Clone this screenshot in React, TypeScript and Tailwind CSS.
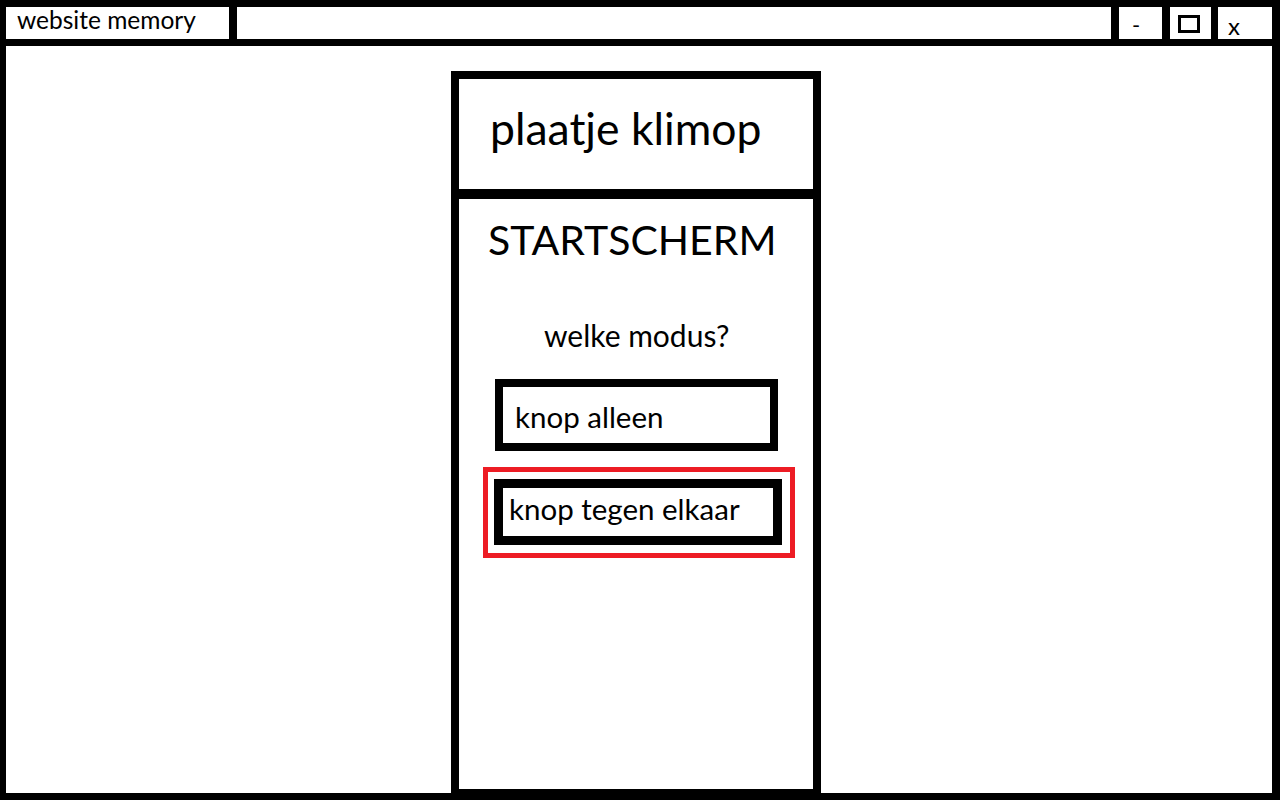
import React from "react";

export default function App() {
  const font = { fontFamily: "Lato, 'Open Sans', sans-serif" };
  return (
    <div className="w-[1280px] h-[800px] bg-black flex flex-col pt-[7px] pl-[6px] pr-[8px] pb-[7px] gap-[7px] text-black" style={font}>
      {/* title bar */}
      <div className="flex h-[32px] shrink-0">
        <div className="w-[223px] bg-white pl-[11px] pt-[1px] text-[24.5px] leading-none">website memory</div>
        <div className="ml-[8px] flex-1 bg-white"></div>
        <div className="ml-[8px] w-[43px] bg-white pl-[13px] pt-[7px] text-[22px] leading-none">-</div>
        <div className="ml-[8px] w-[41px] bg-white pl-[8px] pt-[8px]">
          <div className="w-[22px] h-[18px] border-[3px] border-black"></div>
        </div>
        <div className="ml-[7px] w-[54px] bg-white pl-[10px] pt-[7px] text-[24px] leading-none">x</div>
      </div>
      {/* content */}
      <div className="flex-1 bg-white flex flex-col">
        <div className="ml-[445px] mt-[25px] w-[370px] flex-1 border-[8px] border-b-[4px] border-black flex flex-col">
          <div className="h-[120px] shrink-0 border-b-[10px] border-black pl-[31px] pt-[27px] text-[44.5px] leading-none">
            plaatje klimop
          </div>
          <div className="flex flex-col items-start">
            <div className="ml-[29px] mt-[20px] text-[41px] leading-none">STARTSCHERM</div>
            <div className="ml-[85px] mt-[60px] text-[30px] leading-none">welke modus?</div>
            <div className="ml-[36px] mt-[29px] w-[283px] h-[72px] border-[8px] border-black pl-[12px] pt-[15px] text-[29.5px] leading-none">
              knop alleen
            </div>
            <div className="ml-[24px] mt-[16px] w-[312px] h-[91px] border-[5px] border-[#ed1c24] pl-[6px] pt-[7px]">
              <div className="w-[288px] h-[66px] border-[9px] border-black pl-[6px] pt-[6px] text-[29.5px] leading-none">
                knop tegen elkaar
              </div>
            </div>
          </div>
        </div>
      </div>
    </div>
  );
}
